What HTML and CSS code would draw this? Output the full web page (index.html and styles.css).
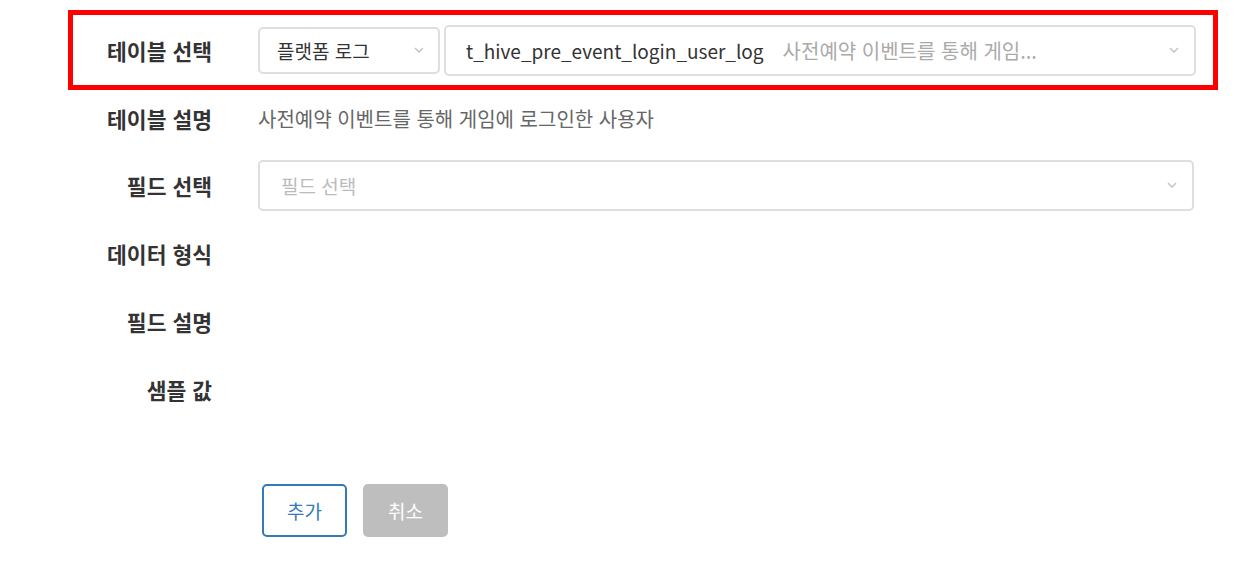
FILE: index.html
```html
<!DOCTYPE html>
<html lang="ko">
<head>
  <meta charset="UTF-8">
  <meta name="viewport" content="width=device-width, initial-scale=1.0">
  <title>필드 추가</title>
  <link rel="stylesheet" href="styles.css">
</head>
<body>
<div class="field-form">

  <div class="row row-table highlight">
    <div class="label">테이블 선택</div>
    <div class="value table-pick">
      <div class="select select-kind">
        <span class="select-text">플랫폼 로그</span>
        <svg class="chevron" width="10" height="6" viewBox="0 0 10 6"><polyline points="1,1 5,5 9,1" fill="none" stroke="#c4c4c4" stroke-width="1.5"/></svg>
      </div>
      <div class="select select-table">
        <span class="select-text">t_hive_pre_event_login_user_log</span>
        <span class="select-sub">사전예약 이벤트를 통해 게임...</span>
        <svg class="chevron" width="10" height="6" viewBox="0 0 10 6"><polyline points="1,1 5,5 9,1" fill="none" stroke="#c4c4c4" stroke-width="1.5"/></svg>
      </div>
    </div>
  </div>

  <div class="row row-desc">
    <div class="label">테이블 설명</div>
    <div class="value desc-text">사전예약 이벤트를 통해 게임에 로그인한 사용자</div>
  </div>

  <div class="row">
    <div class="label">필드 선택</div>
    <div class="value">
      <div class="select select-field">
        <span class="placeholder">필드 선택</span>
        <svg class="chevron" width="10" height="6" viewBox="0 0 10 6"><polyline points="1,1 5,5 9,1" fill="none" stroke="#c4c4c4" stroke-width="1.5"/></svg>
      </div>
    </div>
  </div>

  <div class="row">
    <div class="label">데이터 형식</div>
    <div class="value"></div>
  </div>

  <div class="row">
    <div class="label">필드 설명</div>
    <div class="value"></div>
  </div>

  <div class="row">
    <div class="label">샘플 값</div>
    <div class="value"></div>
  </div>

  <div class="row row-actions">
    <div class="label"></div>
    <div class="value actions">
      <button type="button" class="btn btn-add">추가</button>
      <button type="button" class="btn btn-cancel">취소</button>
    </div>
  </div>

</div>
</body>
</html>
```

FILE: styles.css
```css
body {
  margin: 0;
  font-family: 'Noto Sans CJK KR', 'Noto Sans', sans-serif;
  background-color: #fff;
  color: #333;
}

.field-form {
  margin-left: 68px;
  width: 1150px;
}

.row {
  display: grid;
  grid-template-columns: 139px 1fr;
  column-gap: 46px;
  align-items: center;
  height: 58px;
  padding-right: 19px;
  border: 5px solid transparent;
}

.row.highlight {
  border-color: #f00;
}

.row-table {
  margin-top: 10px;
  height: 70px;
  padding-right: 17px;
}

.row-desc {
  height: 46px;
  margin-bottom: 5px;
}

.label {
  text-align: right;
  font-size: 21.5px;
  font-weight: bold;
  color: #333;
}

.table-pick {
  display: flex;
  align-items: center;
  gap: 4px;
}

.select {
  display: flex;
  align-items: center;
  box-sizing: border-box;
  border: 2px solid #dedede;
  border-radius: 5px;
  background-color: #fff;
  font-size: 19px;
}

.select-kind {
  width: 182px;
  height: 47px;
  padding: 0 14px 0 17px;
}

.select-table {
  flex: 1;
  height: 51px;
  padding: 0 15px 0 20px;
}

.select-field {
  height: 51px;
  padding: 0 15px 0 21px;
}

.select-text {
  color: #333;
  white-space: nowrap;
}

.select-sub {
  margin-left: 19px;
  font-size: 20px;
  color: #aaa;
  white-space: nowrap;
}

.placeholder {
  color: #bbb;
}

.chevron {
  margin-left: auto;
}

.desc-text {
  font-size: 20px;
  color: #666;
}

.row-actions {
  margin-top: 56px;
  height: 53px;
}

.actions {
  display: flex;
  gap: 16px;
  padding-left: 4px;
}

.btn {
  width: 85px;
  height: 53px;
  border-radius: 5px;
  font-family: inherit;
  font-size: 19px;
  cursor: pointer;
}

.btn-add {
  background-color: #fff;
  color: #337ab7;
  border: 2px solid #337ab7;
}

.btn-cancel {
  background-color: #bebebe;
  color: #fff;
  border: none;
}
```
